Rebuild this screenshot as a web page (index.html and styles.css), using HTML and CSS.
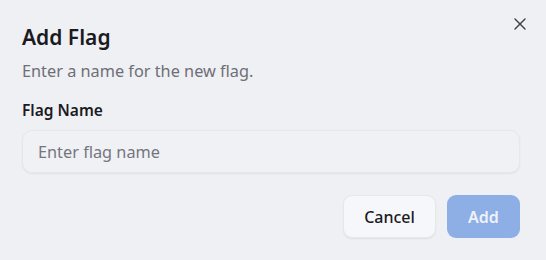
FILE: index.html
```html
<!DOCTYPE html>
<html>
<head>
<meta charset="utf-8">
<link rel="stylesheet" href="styles.css">
</head>
<body>
<div class="dialog">
  <button class="close" aria-label="Close">
    <svg width="14" height="14" viewBox="0 0 14 14"><path d="M2 2L12 12M12 2L2 12" stroke="#3a3a40" stroke-width="1.4" stroke-linecap="round"/></svg>
  </button>
  <h1 class="title">Add Flag</h1>
  <p class="desc">Enter a name for the new flag.</p>
  <label class="label" for="flag">Flag Name</label>
  <input class="input" id="flag" type="text" placeholder="Enter flag name">
  <div class="actions">
    <button class="btn cancel">Cancel</button>
    <button class="btn add">Add</button>
  </div>
</div>
</body>
</html>
```
FILE: styles.css
```css
html, body {
  margin: 0;
  padding: 0;
  background: #eff0f4;
}
body {
  font-family: "Noto Sans", "Open Sans", sans-serif;
  width: 546px;
  height: 260px;
  overflow: hidden;
}
.dialog {
  position: relative;
  padding: 22px 26px 22px 22px;
  display: flex;
  flex-direction: column;
}
.close {
  position: absolute;
  top: 17px;
  right: 19px;
  width: 14px;
  height: 14px;
  padding: 0;
  border: 0;
  background: none;
  display: flex;
}
.title {
  margin: 0;
  font-size: 21px;
  font-weight: 600;
  line-height: 30px;
  color: #1b1b1f;
}
.desc {
  margin: 8px 0 0;
  font-size: 16.3px;
  line-height: 22px;
  color: #6e6e76;
}
.label {
  margin-top: 17px;
  font-size: 15.5px;
  font-weight: 600;
  line-height: 22px;
  color: #1b1b1f;
}
.input {
  margin-top: 9px;
  box-sizing: border-box;
  height: 43px;
  width: 498px;
  border: 1px solid #e6e7eb;
  border-radius: 10px;
  background: #f0f1f5;
  box-shadow: 0 1px 2px rgba(0,0,0,0.06);
  padding: 0 15px;
  font-family: inherit;
  font-size: 16.3px;
  color: #1b1b1f;
  outline: none;
}
.input::placeholder {
  color: #75757d;
}
.actions {
  margin-top: 22px;
  display: flex;
  justify-content: flex-end;
  gap: 11px;
}
.btn {
  height: 43px;
  border-radius: 9px;
  font-family: inherit;
  font-size: 16px;
  font-weight: 500;
  padding: 0;
}
.cancel {
  width: 93px;
  background: #f5f7fb;
  border: 1px solid #e7e8ec;
  box-shadow: 0 1px 2px rgba(0,0,0,0.07);
  color: #1b1b1f;
}
.add {
  width: 73px;
  background: #8eaee6;
  border: 0;
  color: #eef2fb;
  font-weight: 600;
}
```
